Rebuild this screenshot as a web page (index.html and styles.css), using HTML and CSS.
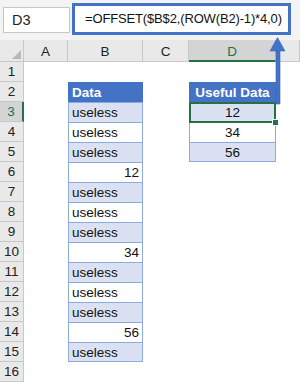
FILE: index.html
```html
<!DOCTYPE html>
<html lang="en">
<head>
    <meta charset="UTF-8">
    <title>OFFSET example</title>
    <link rel="stylesheet" href="styles.css">
</head>
<body>
<div class="app">

    <!-- name box + formula -->
    <div class="formula-bar">
        <div class="name-box">D3</div>
        <div class="formula">=OFFSET($B$2,(ROW(B2)-1)*4,0)</div>
    </div>

    <!-- sheet grid -->
    <div class="sheet">
        <div class="hd corner"></div>
        <div class="hd col">A</div>
        <div class="hd col">B</div>
        <div class="hd col">C</div>
        <div class="hd col active-col">D</div>
        <div class="hd col"></div>

        <div class="hd row">1</div><div></div><div></div><div></div><div></div><div></div>

        <div class="hd row">2</div><div></div>
        <div class="tc th">Data</div><div></div>
        <div class="tc th center">Useful Data</div><div></div>

        <div class="hd row active-row">3</div><div></div>
        <div class="tc band">useless</div><div></div>
        <div class="tc band center selected">12<span class="handle"></span></div><div></div>

        <div class="hd row">4</div><div></div>
        <div class="tc">useless</div><div></div>
        <div class="tc center">34</div><div></div>

        <div class="hd row">5</div><div></div>
        <div class="tc band">useless</div><div></div>
        <div class="tc band center last">56</div><div></div>

        <div class="hd row">6</div><div></div>
        <div class="tc num">12</div><div></div><div></div><div></div>

        <div class="hd row">7</div><div></div>
        <div class="tc band">useless</div><div></div><div></div><div></div>

        <div class="hd row">8</div><div></div>
        <div class="tc">useless</div><div></div><div></div><div></div>

        <div class="hd row">9</div><div></div>
        <div class="tc band">useless</div><div></div><div></div><div></div>

        <div class="hd row">10</div><div></div>
        <div class="tc num">34</div><div></div><div></div><div></div>

        <div class="hd row">11</div><div></div>
        <div class="tc band">useless</div><div></div><div></div><div></div>

        <div class="hd row">12</div><div></div>
        <div class="tc">useless</div><div></div><div></div><div></div>

        <div class="hd row">13</div><div></div>
        <div class="tc band">useless</div><div></div><div></div><div></div>

        <div class="hd row">14</div><div></div>
        <div class="tc num">56</div><div></div><div></div><div></div>

        <div class="hd row">15</div><div></div>
        <div class="tc band last">useless</div><div></div><div></div><div></div>

        <div class="hd row">16</div><div></div><div></div><div></div><div></div><div></div>
    </div>

    <!-- arrow from D3 up to the formula -->
    <svg class="arrow" width="24" height="72" viewBox="0 0 24 72">
        <rect x="8" y="12" width="4" height="56" fill="#4472c4" stroke="#3b66b5" stroke-width="0.6"/>
        <polygon points="9.5,1.5 2,15 17,15" fill="#4472c4" stroke="#3b66b5" stroke-width="0.6"/>
    </svg>

</div>
</body>
</html>
```

FILE: styles.css
```css
body {
    margin: 0;
    background: #fff;
    font-family: "Liberation Sans", Arial, sans-serif;
}

.app {
    position: relative;
    width: 300px;
    height: 382px;
    overflow: hidden;
}

/* formula bar */
.formula-bar {
    height: 40px;
    background: #f3f3f3;
    display: flex;
    align-items: flex-start;
    padding-top: 3px;
    box-sizing: border-box;
}

.name-box {
    margin: 4px 0 0 3px;
    width: 67px;
    height: 26px;
    box-sizing: border-box;
    background: #fff;
    border: 1px solid #c6c6c6;
    font-size: 14.5px;
    line-height: 24px;
    padding-left: 8px;
    color: #222;
}

.formula {
    margin-left: 2px;
    width: 219px;
    height: 32px;
    box-sizing: border-box;
    background: #fff;
    border: 3px solid #4472c4;
    font-size: 13px;
    letter-spacing: -0.15px;
    line-height: 26px;
    padding-left: 10px;
    color: #111;
    white-space: nowrap;
}

/* sheet */
.sheet {
    display: grid;
    grid-template-columns: 24px 44px 75px 46px 87px 24px;
    grid-template-rows: 22px;
    grid-auto-rows: 20px;
    font-size: 13.5px;
    color: #111;
}

.hd {
    background: #e9e9e9;
    border-right: 1px solid #c8c8c8;
    border-bottom: 1px solid #c8c8c8;
    box-sizing: border-box;
    text-align: center;
    color: #222;
    font-size: 13.5px;
}

.corner {
    position: relative;
}

.corner::after {
    content: "";
    position: absolute;
    right: 2px;
    bottom: 2px;
    border-left: 9px solid transparent;
    border-bottom: 9px solid #b9b9b9;
}

.col {
    padding-top: 4px;
    line-height: 16px;
}

.row {
    line-height: 20px;
}

.active-col {
    background: #d4d4d4;
    color: #217346;
    border-bottom: 2px solid #217346;
}

.active-row {
    background: #d4d4d4;
    color: #217346;
    border-right: 2px solid #217346;
}

/* table cells */
.tc {
    box-sizing: border-box;
    border: 1px solid #8ea9db;
    border-bottom: none;
    padding: 0 3px;
    line-height: 20px;
    white-space: nowrap;
    background: #fff;
}

.tc.last {
    border-bottom: 1px solid #8ea9db;
}

.th {
    background: #4472c4;
    border-color: #4472c4;
    color: #fff;
    font-weight: bold;
}

.band {
    background: #d9e1f2;
}

.num {
    text-align: right;
}

.center {
    text-align: center;
}

.selected {
    position: relative;
}

.selected::after {
    content: "";
    position: absolute;
    left: -1px;
    top: -1px;
    right: -1px;
    bottom: -1px;
    border: 2px solid #217346;
}

.handle {
    position: absolute;
    right: -4px;
    bottom: -4px;
    width: 5px;
    height: 5px;
    background: #217346;
    border: 1px solid #fff;
    z-index: 2;
}

.arrow {
    position: absolute;
    left: 268px;
    top: 36px;
}
```
